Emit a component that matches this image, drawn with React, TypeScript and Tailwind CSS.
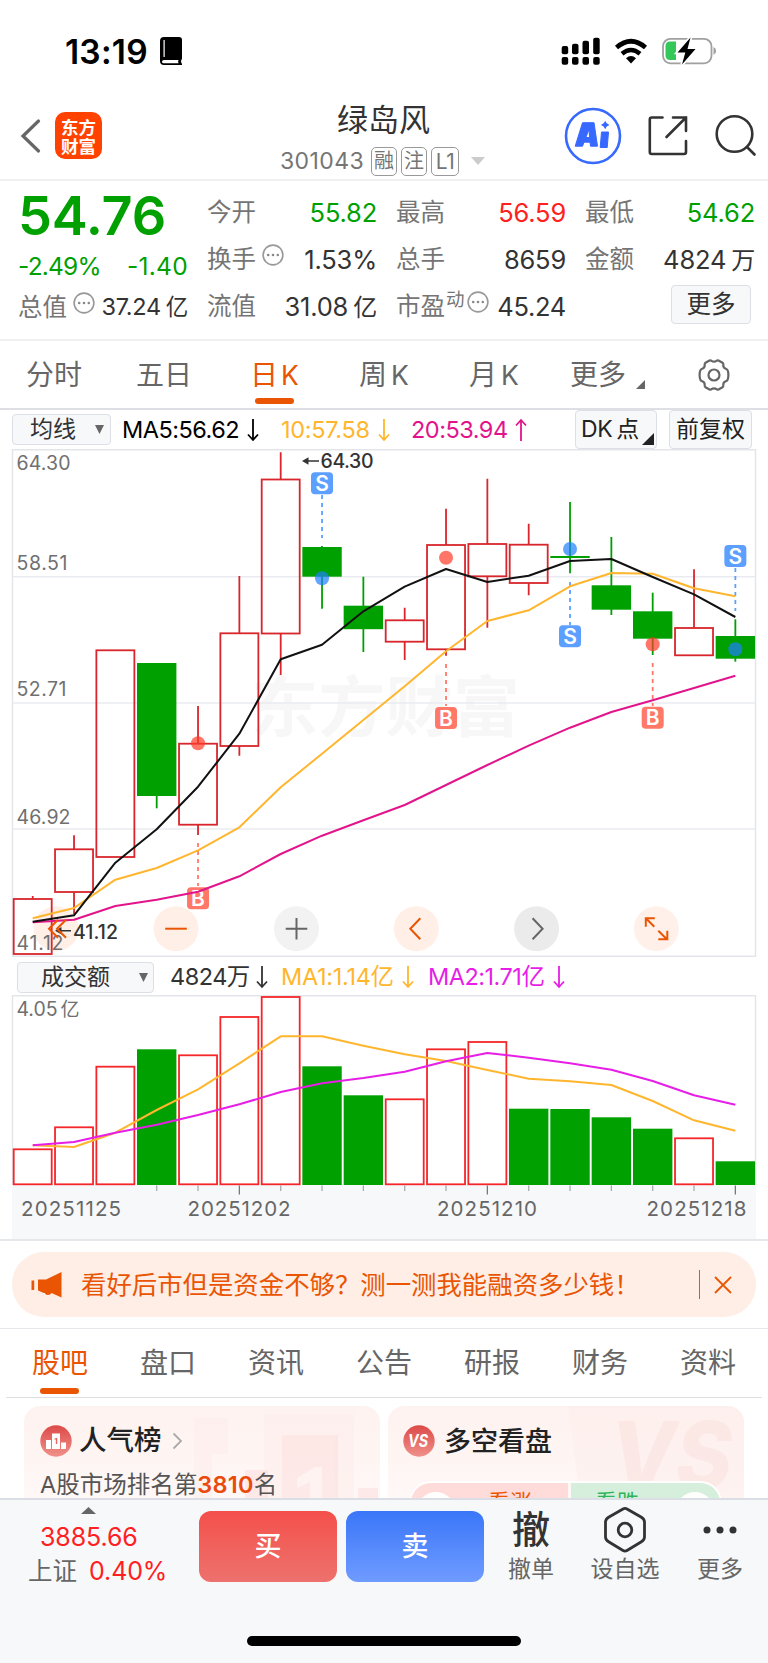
import React from 'react';

type Candle = {
    up: boolean;
    high: number;
    top: number;
    bottom: number;
    low: number;
};

type Signal = {
    type: 'S' | 'B';
    index: number;
    box: number;
    from: number;
    to: number;
    dot: number;
};

type Volume = {
    up: boolean;
    y: number;
};

const RED = '#d8262c';
const GREEN = '#00a000';

const colX = (i: number) => 32.7 + i * 41.333;

const candles: Candle[] = [
    {up: true, high: 896, top: 899, bottom: 954, low: 954},
    {up: true, high: 835.3, top: 849.3, bottom: 892, low: 914},
    {up: true, high: 650.3, top: 650.3, bottom: 857, low: 857},
    {up: false, high: 663, top: 663, bottom: 796, low: 808.3},
    {up: true, high: 706, top: 743.7, bottom: 824.7, low: 835},
    {up: true, high: 576, top: 633.3, bottom: 746, low: 755.7},
    {up: true, high: 452.3, top: 479.5, bottom: 633.5, low: 675},
    {up: false, high: 546, top: 547, bottom: 576.7, low: 608.7},
    {up: false, high: 576.7, top: 605.7, bottom: 629.2, low: 652},
    {up: true, high: 607.7, top: 620.3, bottom: 641.7, low: 660},
    {up: true, high: 508.7, top: 545, bottom: 649.3, low: 655.7},
    {up: true, high: 478.7, top: 544, bottom: 576.3, low: 627.7},
    {up: true, high: 523.7, top: 544.7, bottom: 583, low: 595.3},
    {up: false, high: 502, top: 556, bottom: 558, low: 573.3},
    {up: false, high: 537, top: 585.3, bottom: 609.7, low: 615},
    {up: false, high: 592.7, top: 611.3, bottom: 638.7, low: 655},
    {up: true, high: 569.3, top: 628, bottom: 655.3, low: 655.3},
    {up: false, high: 619.3, top: 636, bottom: 658.7, low: 661.7},
];

const ma5 = [921.7, 915.3, 862.7, 829.3, 786.7, 733.7, 659.3, 644.7, 611.3, 586.7, 569, 582, 575.7, 561, 559, 577, 594.3, 617];
const ma10 = [918.3, 908, 879.7, 868, 850.3, 827.3, 787.3, 753.7, 720, 686.3, 651.3, 621, 610.3, 586.3, 573, 573.7, 588.3, 596.3];
const ma20 = [922.3, 919.7, 906, 899.7, 891.7, 876.3, 854, 835.7, 820.3, 805, 785, 765, 745.7, 727.7, 712, 700.3, 688, 675.7];

const signals: Signal[] = [
    {type: 'B', index: 4, box: 898.3, from: 843, to: 886, dot: 743.3},
    {type: 'S', index: 7, box: 483.3, from: 495, to: 538, dot: 578.3},
    {type: 'B', index: 10, box: 718, from: 664, to: 706, dot: 557.7},
    {type: 'S', index: 13, box: 636.3, from: 582, to: 625, dot: 549},
    {type: 'B', index: 15, box: 717.7, from: 663, to: 706, dot: 644.3},
    {type: 'S', index: 17, box: 556, from: 568, to: 611, dot: 649.3},
];

const volumes: Volume[] = [
    {up: true, y: 1149.3},
    {up: true, y: 1127.3},
    {up: true, y: 1066.7},
    {up: false, y: 1049.3},
    {up: true, y: 1055.3},
    {up: true, y: 1017},
    {up: true, y: 997},
    {up: false, y: 1066.3},
    {up: false, y: 1095.3},
    {up: true, y: 1099.3},
    {up: true, y: 1049.3},
    {up: true, y: 1042},
    {up: false, y: 1108.7},
    {up: false, y: 1109},
    {up: false, y: 1117.3},
    {up: false, y: 1128.7},
    {up: true, y: 1138.3},
    {up: false, y: 1161.3},
];
const volMa1 = [1145.3, 1147, 1132.7, 1110, 1089.3, 1063.3, 1036.3, 1036.3, 1045.7, 1054.3, 1061, 1070, 1078.7, 1081.3, 1085, 1101, 1120.3, 1130.7];
const volMa2 = [1145.3, 1142, 1132.7, 1124.7, 1115, 1104.3, 1092, 1083.3, 1078, 1071.7, 1061.3, 1053, 1057.7, 1063.3, 1069.7, 1081, 1095.3, 1104.7];

const toPoints = (values: number[]) => values.map((y, i) => `${colX(i)},${y}`).join(' ');

const Arrow: React.FC<{up?: boolean; className?: string}> = ({up, className = ''}) => (
    <svg className={`shrink-0 ${className}`} width="12" height="24" viewBox="0 0 12 24" fill="none"
         stroke="currentColor" strokeWidth="1.8">
        {up ? <path d="M6 23V2M1 7.5L6 2l5 5.5"/> : <path d="M6 1v21M1 16.5L6 22l5-5.5"/>}
    </svg>
);

const Dots: React.FC<{className?: string}> = ({className = ''}) => (
    <svg className={`shrink-0 ${className}`} width="22" height="22" viewBox="0 0 22 22">
        <circle cx="11" cy="11" r="9.9" fill="none" stroke="#999" strokeWidth="1.6"/>
        <circle cx="6.2" cy="11" r="1.3" fill="#888"/>
        <circle cx="11" cy="11" r="1.3" fill="#888"/>
        <circle cx="15.8" cy="11" r="1.3" fill="#888"/>
    </svg>
);

const StatusBar: React.FC = () => (
    <div className="flex h-[92px] items-start pt-[36px] pl-[65px]">
        <span className="w-[95px] pt-[1px] text-[33.5px] leading-[30px] font-semibold tracking-[0.2px] text-black">13:19</span>
        <svg width="23" height="30" viewBox="0 0 23 30">
            <path fillRule="evenodd"
                  d="M4 1h15q3 0 3 3v19q-2 2 0 5v1H4q-4 0-4-4V5q0-4 4-4zM4 24q-2 0-2 1.7T4 27.300h14.500q-.8-1.600 0-3.300zM3.500 4v17h1.200V4z"/>
        </svg>
        <svg className="ml-[378px]" width="40" height="30" viewBox="561 36 40 30">
            <rect x="561.7" y="46" width="6.500" height="8.300" rx="2"/>
            <rect x="572" y="43.700" width="6.500" height="10.600" rx="2"/>
            <rect x="582.500" y="40.700" width="6.500" height="13.600" rx="2"/>
            <rect x="593.200" y="37.700" width="6.500" height="16.600" rx="2"/>
            <rect x="561.7" y="57" width="6.500" height="7.700" rx="2"/>
            <rect x="572" y="57" width="6.500" height="7.700" rx="2"/>
            <rect x="582.500" y="57" width="6.500" height="7.700" rx="2"/>
            <rect x="593.200" y="57" width="6.500" height="7.700" rx="2"/>
        </svg>
        <svg className="ml-[13px]" width="36" height="30" viewBox="614 36 36 30" fill="none" stroke="black">
            <path d="M616.500 47.500q14.500-12.500 29 0" strokeWidth="4.600"/>
            <path d="M622 53.800q9-7.500 18 0" strokeWidth="4.400"/>
            <path d="M631 63.500l-5-5.300q5-4.200 10 0z" fill="black" stroke="none"/>
        </svg>
        <svg className="ml-[11px]" width="56" height="30" viewBox="661 36 56 30">
            <rect x="663" y="38.800" width="48.500" height="24.500" rx="7.500" fill="none" stroke="#a0a0a0" strokeWidth="1.800"/>
            <path d="M713.500 47v8q2.600-1.200 2.600-4t-2.600-4z" fill="#a0a0a0"/>
            <path d="M670 41.500h6v18.500h-6q-4.500 0-4.500-5v-8.500q0-5 4.500-5z" fill="#34c759"/>
            <path d="M690.500 37.500L677.500 52.500h7.800L682 64.500l13.500-15.500h-8z" fill="black" stroke="white" strokeWidth="3.400"
                  paintOrder="stroke"/>
        </svg>
    </div>
);

const Header: React.FC = () => (
    <div className="flex h-[89px] items-start border-b-2 border-[#efefef]">
        <svg className="mt-[26px] ml-[20px]" width="22" height="36" viewBox="0 0 22 36" fill="none" stroke="#666"
             strokeWidth="3.200" strokeLinecap="round">
            <path d="M18.500 3L3 18l15.500 15"/>
        </svg>
        <div
            className="mt-[20px] ml-[13px] flex h-[47px] w-[47px] flex-col items-center justify-center rounded-[10px] bg-[#ff4200] font-['Noto_Sans_CJK_SC',sans-serif] text-[17.500px] leading-[19px] font-bold text-white">
            <span>东方</span>
            <span>财富</span>
        </div>
        <div className="ml-[178px] w-[206px]">
            <div className="mt-[11px] ml-[57px] text-[31px] leading-[34px] text-[#333]">绿岛风</div>
            <div className="mt-[9px] flex h-[30px] items-center text-[23px] leading-none text-[#757575]">
                <span className="w-[91px] tracking-[0.4px]">301043</span>
                <span className="mr-[4px] flex h-[29px] w-[26px] items-center justify-center rounded-[5px] border-[1.5px] border-[#999] text-[20px]">融</span>
                <span className="mr-[4px] flex h-[29px] w-[26px] items-center justify-center rounded-[5px] border-[1.5px] border-[#999] text-[20px]">注</span>
                <span className="flex h-[29px] w-[28px] items-center justify-center rounded-[5px] border-[1.5px] border-[#999] text-[21px] tracking-[-0.5px]">L1</span>
                <svg className="ml-[12px] shrink-0" width="14" height="8" viewBox="0 0 14 8">
                    <path d="M0 0h14L7 8z" fill="#ccc"/>
                </svg>
            </div>
        </div>
        <svg className="mt-[15px] ml-[78px]" width="58" height="58" viewBox="0 0 58 58">
            <circle cx="29" cy="29" r="27" fill="none" stroke="#3769ff" strokeWidth="2.600"/>
            <path fillRule="evenodd" d="M18.500 15.700h11.500l3.500 23.500H26.500l-.5-4h-6l-1.500 4H11.200zM25 22.500L21.800 30.500h3.800z"
                  fill="#3769ff" stroke="#3769ff" strokeLinejoin="round"/>
            <path d="M37.500 25h7l-1.300 15.500h-7z" fill="#3769ff" stroke="#3769ff" strokeLinejoin="round"/>
            <path d="M41.200 13.700q1 3.300 4.300 4.300-3.300 1-4.300 4.300-1-3.300-4.300-4.300 3.300-1 4.300-4.300z" fill="#3769ff"/>
        </svg>
        <svg className="mt-[23px] ml-[25px]" width="42" height="42" viewBox="0 0 42 42" fill="none" stroke="#333" strokeWidth="2.600"
             strokeLinecap="round">
            <path d="M15.500 2.500H4.800q-2 0-2 2V37q0 2 2 2H37q2 0 2-2V26"/>
            <path d="M26 2.500h13v13.500M39 2.500L19.500 22"/>
        </svg>
        <svg className="mt-[22px] ml-[25px]" width="44" height="44" viewBox="0 0 44 44" fill="none" stroke="#333" strokeWidth="2.600"
             strokeLinecap="round">
            <circle cx="20.500" cy="20" r="17.800"/>
            <path d="M33 33l7.500 7.500"/>
        </svg>
    </div>
);

const Quote: React.FC<{label: string; value: string; color?: string; dots?: boolean; unit?: string}> = ({
    label, value, color = 'text-[#333]', dots, unit
}) => (
    <div className="flex h-[47px] items-center">
        <span className="text-[24.5px] text-[#757575]">{label}</span>
        {dots && <Dots className="mb-[9px] ml-[6px]"/>}
        <span className={`ml-auto text-[25.5px] tracking-[-0.2px] ${color}`}>{value}{unit && <span className="ml-[5px] text-[24px]">{unit}</span>}</span>
    </div>
);

const QuotePanel: React.FC = () => (
    <div className="grid h-[160px] grid-cols-[170px_170px_170px_170px] gap-x-[19px] border-b-2 border-[#efefef] pt-[8px] pl-[18px] leading-none whitespace-nowrap">
        <div>
            <div className="flex h-[53px] items-center text-[54px] font-semibold tracking-[-0.2px] text-[#00a000]">54.76</div>
            <div className="flex h-[49px] items-center justify-between text-[24.5px] text-[#00a000]">
                <span className="tracking-[-0.8px]">-2.49%</span>
                <span className="tracking-[0.3px]">-1.40</span>
            </div>
            <div className="flex h-[32px] items-center">
                <span className="text-[24.5px] text-[#757575]">总值</span>
                <Dots className="mb-[9px] ml-[6px]"/>
                <span className="ml-auto text-[23.5px] tracking-[-0.3px] text-[#333]">37.24<span className="ml-[5px] text-[22.5px]">亿</span></span>
            </div>
        </div>
        <div>
            <Quote label="今开" value="55.82" color="text-[#00a000]"/>
            <Quote label="换手" value="1.53%" dots/>
            <Quote label="流值" value="31.08" unit="亿"/>
        </div>
        <div>
            <Quote label="最高" value="56.59" color="text-[#ff2020]"/>
            <Quote label="总手" value="8659"/>
            <div className="flex h-[47px] items-center">
                <span className="text-[24.5px] text-[#757575]">市盈</span>
                <span className="mb-[15px] ml-[1px] text-[18.5px] text-[#757575]">动</span>
                <Dots className="mb-[9px] ml-[2px]"/>
                <span className="ml-auto text-[25.5px] tracking-[-0.3px] text-[#333]">45.24</span>
            </div>
        </div>
        <div>
            <Quote label="最低" value="54.62" color="text-[#00a000]"/>
            <Quote label="金额" value="4824" unit="万"/>
            <div className="mt-[2px] ml-auto mr-[4px] flex h-[39px] w-[80px] items-center justify-center rounded-[4px] border border-[#dcdfe6] bg-[#f7f8fa] text-[24.5px] text-[#333]">更多</div>
        </div>
    </div>
);

const PeriodTabs: React.FC = () => (
    <div className="flex h-[69px] items-start border-b-2 border-[#dddfe4] pt-[17px] pl-[26px] text-[28px] leading-[34px] whitespace-nowrap text-[#666]">
        <span className="w-[110px]">分时</span>
        <span className="w-[114px]">五日</span>
        <div className="w-[109px] text-[#ea5504]">
            <div>日<span className="ml-[3px] text-[26.5px]">K</span></div>
            <div className="mt-[6px] ml-[5px] h-[6px] w-[39px] rounded-[3px] bg-[#ea5504]"/>
        </div>
        <span className="w-[110px]">周<span className="ml-[4px] text-[26.5px]">K</span></span>
        <span className="w-[101px]">月<span className="ml-[4px] text-[26.5px]">K</span></span>
        <span className="w-[66px]">更多</span>
        <svg className="mt-[22px]" width="9" height="9" viewBox="0 0 9 9"><path d="M9 0v9H0z" fill="#666"/></svg>
        <svg className="ml-[52px]" width="34" height="34" viewBox="0 0 34 34" fill="none" stroke="#666" strokeWidth="2.200"
             strokeLinejoin="round">
            <path d="M12.500 2.500q1.200-.5 2 .3 2.500 1.800 5 0 .8-.8 2-.3l4 2.300q1 .6.800 1.800-.3 2.800 2 3.900 1.700.6 2.200 1.600.9 1.700.9 4.900t-.9 4.900q-.5 1-2.200 1.600-2.300 1.100-2 3.900.2 1.200-.8 1.800l-4 2.300q-1.200.5-2-.3-2.500-1.800-5 0-.8.8-2 .3l-4-2.300q-1-.6-.8-1.800.3-2.800-2-3.900-1.700-.6-2.200-1.600-.9-1.700-.9-4.900t.9-4.900q.5-1 2.200-1.600 2.300-1.100 2-3.900-.2-1.200.8-1.800z"/>
            <circle cx="17" cy="17" r="5.500"/>
        </svg>
    </div>
);

const MaToolbar: React.FC = () => (
    <div className="flex h-[39px] items-center pl-[12px] text-[23.5px] leading-none whitespace-nowrap">
        <div className="flex h-[31px] w-[99px] shrink-0 items-center rounded-[4px] border border-[#dcdfe6] bg-[#f7f8fa] pl-[17px] text-[23px] text-[#333]">
            均线
            <svg className="ml-[19px]" width="9" height="9" viewBox="0 0 9 9"><path d="M0 0h9L4.500 9z" fill="#666"/></svg>
        </div>
        <span className="ml-[11px] w-[125px] shrink-0 tracking-[-0.5px] text-black">MA5:56.62</span>
        <Arrow className="text-black"/>
        <span className="ml-[22px] w-[97px] shrink-0 tracking-[-0.3px] text-[#ffb62e]">10:57.58</span>
        <Arrow className="text-[#ffb62e]"/>
        <span className="ml-[21px] w-[104px] shrink-0 tracking-[-0.5px] text-[#e2148c]">20:53.94</span>
        <Arrow up className="text-[#e2148c]"/>
        <div className="ml-[48px] flex h-[39px] w-[82px] shrink-0 items-center rounded-[4px] border border-[#dcdfe6] bg-[#f7f8fa] pl-[5px] text-[23px] tracking-[-0.4px] text-[#222]">
            DK<span className="ml-[4px]">点</span>
            <svg className="mt-[18px] ml-[3px] shrink-0" width="12" height="12" viewBox="0 0 12 12"><path d="M12 0v12H0z" fill="#222"/></svg>
        </div>
        <div className="ml-[12px] flex h-[39px] w-[83px] shrink-0 items-center justify-center rounded-[4px] border border-[#dcdfe6] bg-[#f7f8fa] text-[23px] text-[#222]">前复权</div>
    </div>
);

const chartButtons = [
    {x: 56, bg: '#ffefe6', color: '#ea5504', d: 'M2-9L-7 0l9 9M10-9L1 0l9 9'},
    {x: 176, bg: '#ffefe6', color: '#ea5504', d: 'M-10.800 0h21.600'},
    {x: 296.500, bg: '#f2f2f2', color: '#666', d: 'M-10.800 0h21.600M0-10.800v21.600'},
    {x: 416.300, bg: '#ffefe6', color: '#ea5504', d: 'M4-10.500L-6 0l10 10.500'},
    {x: 536.600, bg: '#ebebeb', color: '#666', d: 'M-4-10.500L6 0l-10 10.500'},
    {x: 656.300, bg: '#fff1ea', color: '#ea5504', d: 'M-10.500-2v-8.500h9M-10.500-10.500l8.500 8.500M2 10.500h9V2M10.500 10.500L2 2'},
];

const KlineChart: React.FC = () => (
    <svg className="block" width="768" height="508" viewBox="0 449 768 508">
        <text x="251" y="731" textLength="269" lengthAdjust="spacingAndGlyphs" fontSize="66" fontWeight="700" fill="#f7f7f7">东方财富</text>
        <g stroke="#e9ebf1" strokeWidth="1.500">
            <path d="M12 576.700h743M12 703h743M12 829h743"/>
            <path d="M12.500 449.800h743v506.500h-743z" fill="none" stroke="#e3e5e9" strokeWidth="1.500"/>
        </g>
        <circle cx={chartButtons[0].x} cy="928.700" r="22.500" fill={chartButtons[0].bg}/>
        <g fontSize="19.500" fill="#707070">
            <text x="16.500" y="470" textLength="54">64.30</text>
            <text x="16.500" y="570" textLength="51">58.51</text>
            <text x="16.500" y="696" textLength="50">52.71</text>
            <text x="16.500" y="823.800" textLength="54">46.92</text>
            <text x="16.500" y="950" textLength="47">41.12</text>
        </g>
        {candles.map((c, i) => {
            const x = colX(i);
            return c.up ? (
                <g key={i} stroke={RED} strokeWidth="1.800" fill="none">
                    <path d={`M${x} ${c.high}V${c.top}M${x} ${c.bottom}V${c.low}`}/>
                    <rect x={x - 19} y={c.top} width="38" height={c.bottom - c.top}/>
                </g>
            ) : (
                <g key={i}>
                    <path d={`M${x} ${c.high}V${c.low}`} stroke={GREEN} strokeWidth="1.800"/>
                    <rect x={x - 19.700} y={c.top} width="39.400" height={c.bottom - c.top} fill={GREEN}/>
                </g>
            );
        })}
        {signals.map((s) => {
            const x = colX(s.index);
            const color = s.type === 'S' ? '#5c9fff' : '#ff7868';
            return (
                <g key={s.index}>
                    <path d={`M${x} ${s.from}V${s.to}`} stroke={color} strokeWidth="1.800" strokeDasharray="4 4"/>
                    <circle cx={x} cy={s.dot} r="7" fill={s.type === 'S' ? '#1e7fff' : '#ff3b26'} fillOpacity=".7"/>
                    <rect x={x - 11} y={s.box - 11} width="22" height="22" rx="4" fill={color}/>
                    <text x={x} y={s.box + 7.500} textAnchor="middle" fontSize="21" fontWeight="600" fill="white">{s.type}</text>
                </g>
            );
        })}
        <g fill="none" strokeWidth="2" strokeLinejoin="round">
            <polyline points={toPoints(ma20)} stroke="#e2148c"/>
            <polyline points={toPoints(ma10)} stroke="#ffb62e"/>
            <polyline points={toPoints(ma5)} stroke="#111"/>
        </g>
        <g fill="#333" fontSize="19.500" fontWeight="500">
            <path d="M302 461l6.500-3.800v7.600zM307 460.200h12v1.600h-12z"/>
            <text x="320.500" y="468" textLength="53">64.30</text>
            <path d="M55 930.700l6.500-3.800v7.600zM60 929.900h11v1.600H60z"/>
            <text x="73" y="938.700" textLength="45">41.12</text>
        </g>
        {chartButtons.map((b, i) => (
            <g key={b.x} transform={`translate(${b.x} 928.700)`}>
                {i > 0 && <circle r="22.500" fill={b.bg}/>}
                <path d={b.d} fill="none" stroke={b.color} strokeWidth="2"/>
            </g>
        ))}
    </svg>
);

const VolumeToolbar: React.FC = () => (
    <div className="flex h-[38px] items-center pt-[2px] pl-[17px] text-[23.5px] leading-none whitespace-nowrap">
        <div className="flex h-[31px] w-[137px] shrink-0 items-center rounded-[4px] border border-[#dcdfe6] bg-[#f7f8fa] pl-[23px] text-[23px] text-[#333]">
            成交额
            <svg className="ml-[29px]" width="9" height="9" viewBox="0 0 9 9"><path d="M0 0h9L4.500 9z" fill="#666"/></svg>
        </div>
        <span className="ml-[16px] w-[86px] tracking-[-0.5px] text-[#333]">4824万</span>
        <Arrow className="text-[#333]"/>
        <span className="ml-[13px] w-[121px] tracking-[-0.3px] text-[#ffb62e]">MA1:1.14亿</span>
        <Arrow className="text-[#ffb62e]"/>
        <span className="ml-[14px] w-[125px] tracking-[-0.5px] text-[#e61ee6]">MA2:1.71亿</span>
        <Arrow className="text-[#e61ee6]"/>
    </div>
);

const VolumeChart: React.FC = () => (
    <svg className="block" width="768" height="244" viewBox="0 995 768 244">
        <rect x="12" y="1185" width="744" height="56" fill="#f7f8fa"/>
        <path d="M12.500 1185V995.700h743V1185" fill="none" stroke="#e3e5e9" strokeWidth="1.500"/>
        <text x="16.500" y="1016" textLength="41" fontSize="19.500" fill="#707070">4.05</text>
        <text x="60.500" y="1015.500" fontSize="19" fill="#707070">亿</text>
        {volumes.map(({up, y}, i) => {
            const x = colX(i);
            return up ? (
                <rect key={i} x={x - 19} y={y} width="38" height={1184.300 - y} fill="none" stroke="#f5262a" strokeWidth="1.800"/>
            ) : (
                <rect key={i} x={x - 19.700} y={y} width="39.400" height={1185 - y} fill={GREEN}/>
            );
        })}
        <g fill="none" strokeWidth="2" strokeLinejoin="round">
            <polyline points={toPoints(volMa1)} stroke="#ffb62e"/>
            <polyline points={toPoints(volMa2)} stroke="#e61ee6"/>
        </g>
        {volumes.map((_, i) => i > 2 && (
            <path key={i} d={`M${colX(i)} 1185.500v${i % 6 === 5 ? 9 : 5.500}`} stroke={i % 6 === 5 ? '#777' : '#aaa'} strokeWidth="1.300"/>
        ))}
        <g fontSize="20.500" fill="#666">
            <text x="21" y="1216" textLength="100">20251125</text>
            <text x="187.500" y="1216" textLength="103">20251202</text>
            <text x="437" y="1216" textLength="100">20251210</text>
            <text x="646.500" y="1216" textLength="100">20251218</text>
        </g>
    </svg>
);

const Banner: React.FC = () => (
    <div className="h-[90px] border-t-2 border-b border-[#e6e7ea] px-[12px] pt-[11px]">
        <div className="flex h-[65px] items-center rounded-[32px] bg-[#feeee5] pl-[19px] text-[25.4px] leading-none whitespace-nowrap text-[#ea5504]">
            <svg width="32" height="28" viewBox="0 0 32 28" fill="#ea5504">
                <path d="M.5 9.500h2.700v9.500H.500zM7 8.500h8L30.500 1v25.500L20.500 22q-1 2-3.700 2-2.500 0-3-2h-1L7 19.500z"/>
            </svg>
            <span className="ml-[18px] w-[617.5px]">看好后市但是资金不够？测一测我能融资多少钱！</span>
            <span className="h-[29px] w-[1.5px] bg-[#ea5504]"/>
            <svg className="ml-[14px]" width="18" height="18" viewBox="0 0 18 18" stroke="#ea5504" strokeWidth="1.800"><path d="M1 1l16 16M17 1L1 17"/></svg>
        </div>
    </div>
);

const infoTabs = ['股吧', '盘口', '资讯', '公告', '研报', '财务', '资料'];

const InfoTabs: React.FC = () => (
    <div className="mx-[6px] flex h-[69px] border-b border-[#dfdfe2] pt-[17px] pl-[1px] text-[28px] leading-[34px] whitespace-nowrap text-[#666]">
        {infoTabs.map((tab, i) => (
            <div key={tab} className={i === 0 ? 'w-[108px] shrink-0 pl-[25px] text-[#ea5504]' : i === 6 ? 'pl-[25px]' : 'w-[108px] shrink-0 pl-[25px]'}>
                {tab}
                {i === 0 && <div className="mt-[8px] ml-[8px] h-[6px] w-[39px] rounded-[3px] bg-[#ea5504]"/>}
            </div>
        ))}
    </div>
);

const Cards: React.FC = () => (
    <div className="flex h-[100px] gap-[8px] overflow-hidden pt-[8px] pl-[24px] leading-none whitespace-nowrap">
        <div className="relative h-[120px] w-[356px] rounded-[16px] bg-linear-to-b from-[#fef2f0] to-[#fffaf8]">
            <svg className="absolute top-0 left-0" width="356" height="92" viewBox="0 0 356 92">
                <path d="M170 12h34v36h-16v44h-18zM240 8h90v84h-19V29h-53v63h-18z" fill="#fdebe8" fillOpacity=".45"/>
                <path d="M258 29h56v63h-56zM221 64h23v28h-23zM334 82h20v10h-20z" fill="#fbe0dd" fillOpacity=".6"/>
                <path d="M273 72l18-11h7v31h-12V76l-13 6z" fill="#fff3f1"/>
            </svg>
            <div className="relative flex h-[70px] items-center pl-[16px]">
                <svg width="32" height="32" viewBox="0 0 32 32">
                    <defs>
                        <linearGradient id="badge" x1="0" y1="0" x2="0" y2="1">
                            <stop offset="0" stopColor="#dc4a48"/>
                            <stop offset="1" stopColor="#f0918a"/>
                        </linearGradient>
                    </defs>
                    <circle cx="16" cy="16" r="15.700" fill="url(#badge)"/>
                    <path d="M6 15h5v9H6zM12 8.500h8V24h-8zM21 17.500h5V24h-5z" fill="white"/>
                    <text x="16" y="19" textAnchor="middle" fontSize="8" fontWeight="700" fill="#dc5a55">1</text>
                </svg>
                <span className="ml-[7px] text-[27.5px] font-medium text-[#222]">人气榜</span>
                <svg className="ml-[10px]" width="11" height="18" viewBox="0 0 11 18" fill="none" stroke="#aaa" strokeWidth="1.800"><path d="M1.500 1.500L9 9l-7.500 7.500"/></svg>
            </div>
            <div className="relative -mt-[3px] flex h-[24px] items-center pl-[16px] text-[23.5px] text-[#555]">
                A股市场排名第<span className="font-semibold tracking-[0.3px] text-[#ea4b0c]">3810</span>名
            </div>
        </div>
        <div className="relative h-[120px] w-[356px] overflow-hidden rounded-[16px] bg-linear-to-b from-[#fef2f0] to-[#fffaf8]">
            <svg className="absolute top-0 left-0" width="356" height="92" viewBox="0 0 356 92">
                <path d="M180 0h176v92H192z" fill="#fdebe8" fillOpacity=".4"/>
                <text x="222" y="82" textLength="122" lengthAdjust="spacingAndGlyphs" fontSize="92" fontWeight="800" fontStyle="italic" fill="#fbe3e0" fillOpacity=".65">VS</text>
            </svg>
            <div className="relative flex h-[70px] items-center pl-[15px]">
                <svg width="32" height="32" viewBox="0 0 32 32">
                    <circle cx="16" cy="16" r="15.700" fill="url(#badge)"/>
                    <text x="15" y="22" textAnchor="middle" textLength="20" lengthAdjust="spacingAndGlyphs" fontSize="17" fontWeight="700" fontStyle="italic" fill="white">VS</text>
                </svg>
                <span className="ml-[9px] text-[27px] font-medium text-[#222]">多空看盘</span>
            </div>
            <div className="relative mt-[5px] ml-[21px] flex h-[44px] w-[313px] gap-[3px] overflow-hidden rounded-full border-2 border-white text-[22px]">
                <div className="w-[157px] shrink-0 bg-[#ffdcd9] pt-[8px] pl-[77px] text-[#ea5504]">看涨</div>
                <div className="w-[150px] shrink-0 bg-[#d5efdc] pt-[8px] pl-[24px] text-[#2fb457]">看跌</div>
                <div className="absolute top-[9px] left-[6px] h-[38px] w-[38px] rounded-full bg-white"/>
                <div className="absolute top-[9px] right-[6px] h-[38px] w-[38px] rounded-full bg-white"/>
            </div>
        </div>
    </div>
);

const TradeBar: React.FC = () => (
    <div className="h-[165px] border-t-2 border-[#dbdee4] bg-[#f7f8fa] leading-none whitespace-nowrap">
        <div className="flex h-[136px] items-start text-[23px] text-[#666]">
            <div className="w-[199px]">
                <svg className="mt-[7px] ml-[81px] block" width="15" height="7" viewBox="0 0 15 7"><path d="M7.500 0L15 7H0z" fill="#666"/></svg>
                <div className="mt-[10px] ml-[40px] text-[25px] leading-[26px] tracking-[-0.1px] text-[#ff2020]">3885.66</div>
                <div className="mt-[8px] ml-[28px] flex items-center text-[24.5px] leading-[26px]">
                    上证<span className="ml-[12px] text-[25px] tracking-[-0.1px] text-[#ff2020]">0.40%</span>
                </div>
            </div>
            <div className="mt-[11px] flex h-[71px] w-[138px] items-center justify-center rounded-[12px] bg-linear-to-b from-[#f44f4b] to-[#ed716d] text-[27px] font-medium text-white">买</div>
            <div className="mt-[11px] ml-[9px] flex h-[71px] w-[138px] items-center justify-center rounded-[12px] bg-linear-to-b from-[#3a76f8] to-[#6f9bff] text-[27px] font-medium text-white">卖</div>
            <div className="ml-[16px] flex w-[62px] flex-col items-center">
                <span className="mt-[9px] text-[38px] leading-[40px] font-medium text-[#333]">撤</span>
                <span className="mt-[8px] leading-[24px]">撤单</span>
            </div>
            <div className="ml-[13px] flex w-[100px] flex-col items-center">
                <svg className="mt-[6px]" width="44" height="48" viewBox="0 0 44 48" fill="none" stroke="#333" strokeWidth="2.800" strokeLinejoin="round">
                    <path d="M20 3q2-1.200 4 0l14 8q3.500 2 3.500 5v15q0 3-3.500 5l-14 8.500q-2 1.200-4 0L6 36q-3.500-2-3.500-5V16q0-3 3.500-5z"/>
                    <circle cx="22" cy="24" r="6.800"/>
                </svg>
                <span className="mt-[3px] leading-[24px]">设自选</span>
            </div>
            <div className="ml-[20px] flex w-[50px] flex-col items-center">
                <svg className="mt-[26px]" width="34" height="8" viewBox="0 0 34 8" fill="#333">
                    <circle cx="4" cy="4" r="3.500"/>
                    <circle cx="17" cy="4" r="3.500"/>
                    <circle cx="30" cy="4" r="3.500"/>
                </svg>
                <span className="mt-[23px] leading-[24px]">更多</span>
            </div>
        </div>
        <div className="mx-auto h-[10px] w-[274px] rounded-full bg-black"/>
    </div>
);

const App: React.FC = () => (
    <div className="h-[1663px] w-[768px] overflow-hidden bg-white font-['Inter','Noto_Sans_CJK_SC',sans-serif]">
        <StatusBar/>
        <Header/>
        <QuotePanel/>
        <PeriodTabs/>
        <MaToolbar/>
        <KlineChart/>
        <VolumeToolbar/>
        <VolumeChart/>
        <Banner/>
        <InfoTabs/>
        <Cards/>
        <TradeBar/>
    </div>
);

export default App;
